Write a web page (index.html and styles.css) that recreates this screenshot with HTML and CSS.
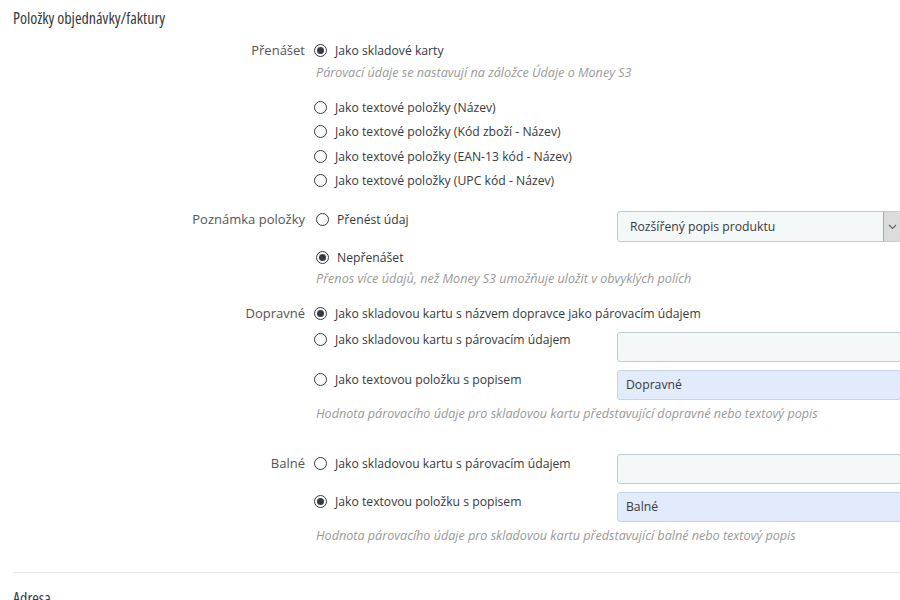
FILE: index.html
```html
<!DOCTYPE html>
<html lang="cs">
<head>
<meta charset="utf-8">
<title>Položky objednávky/faktury</title>
<link rel="stylesheet" href="styles.css">
</head>
<body>
<div class="page">
  <h3 class="section-title">Položky objednávky/faktury</h3>

  <div class="group g1">
    <div class="label">Přenášet</div>
    <div class="content">
      <label class="opt"><input type="radio" name="p" checked><span>Jako skladové karty</span></label>
      <div class="help h1">Párovací údaje se nastavují na záložce Údaje o Money S3</div>
      <div class="opts">
        <label class="opt"><input type="radio" name="p"><span>Jako textové položky (Název)</span></label>
        <label class="opt"><input type="radio" name="p"><span>Jako textové položky (Kód zboží - Název)</span></label>
        <label class="opt"><input type="radio" name="p"><span>Jako textové položky (EAN-13 kód - Název)</span></label>
        <label class="opt"><input type="radio" name="p"><span>Jako textové položky (UPC kód - Název)</span></label>
      </div>
    </div>
  </div>

  <div class="group g2">
    <div class="label short">Poznámka položky</div>
    <div class="content">
      <div class="row">
        <label class="opt short shift"><input type="radio" name="n"><span>Přenést údaj</span></label>
        <div class="select"><span class="select-text">Rozšířený popis produktu</span><span class="select-arrow"><svg width="9" height="6" viewBox="0 0 9 6"><path d="M1 1l3.5 3.5L8 1" fill="none" stroke="#666" stroke-width="1.2"/></svg></span></div>
      </div>
      <label class="opt line shift n2"><input type="radio" name="n" checked><span>Nepřenášet</span></label>
      <div class="help h2">Přenos více údajů, než Money S3 umožňuje uložit v obvyklých polích</div>
    </div>
  </div>

  <div class="group g3">
    <div class="label line">Dopravné</div>
    <div class="content">
      <label class="opt line"><input type="radio" name="d" checked><span>Jako skladovou kartu s názvem dopravce jako párovacím údajem</span></label>
      <div class="row r2">
        <label class="opt line"><input type="radio" name="d"><span>Jako skladovou kartu s párovacím údajem</span></label>
        <div class="field f-off"></div>
      </div>
      <div class="row r3">
        <label class="opt line"><input type="radio" name="d"><span>Jako textovou položku s popisem</span></label>
        <div class="field f-on">Dopravné</div>
      </div>
      <div class="help h3">Hodnota párovacího údaje pro skladovou kartu představující dopravné nebo textový popis</div>
    </div>
  </div>

  <div class="group g4">
    <div class="label line">Balné</div>
    <div class="content">
      <div class="row">
        <label class="opt line"><input type="radio" name="b"><span>Jako skladovou kartu s párovacím údajem</span></label>
        <div class="field f-off"></div>
      </div>
      <div class="row r3">
        <label class="opt line"><input type="radio" name="b" checked><span>Jako textovou položku s popisem</span></label>
        <div class="field f-on">Balné</div>
      </div>
      <div class="help h3">Hodnota párovacího údaje pro skladovou kartu představující balné nebo textový popis</div>
    </div>
  </div>

  <hr class="divider">
  <h3 class="section-title next">Adresa</h3>
</div>
</body>
</html>
```

FILE: styles.css
```css
html, body {
  margin: 0;
  padding: 0;
  background: #fff;
  overflow: hidden;
}
body {
  font-family: "Open Sans", "Noto Sans", sans-serif;
  font-size: 12.2px;
  color: #363a41;
  width: 900px;
  height: 600px;
}
.page {
  padding: 0 0 0 13px;
}
.section-title {
  margin: 0;
  padding: 9px 0;
  font-size: 16px;
  line-height: 18px;
  font-weight: 500;
  color: #363a41;
  font-stretch: 78%;
}
.group {
  display: flex;
}
.label {
  width: 292px;
  flex: 0 0 292px;
  text-align: right;
  color: #555;
  font-size: 13px;
  line-height: 24px;
  padding-right: 9px;
}
.label.short { line-height: 16px; }
.label.line { line-height: 18px; }
.content {
  display: flex;
  flex-direction: column;
  align-items: flex-start;
}
.opt {
  display: flex;
  align-items: center;
  gap: 8px;
  height: 24px;
  white-space: nowrap;
  color: #363a41;
}
.opt input {
  appearance: none;
  -webkit-appearance: none;
  margin: 0;
  width: 13px;
  height: 13px;
  border: 1px solid #363a41;
  border-radius: 50%;
  box-sizing: border-box;
  background: #fff;
  flex: 0 0 13px;
  position: relative;
}
.opt input:checked::after {
  content: "";
  position: absolute;
  left: 2px;
  top: 2px;
  width: 7px;
  height: 7px;
  border-radius: 50%;
  background: #363a41;
}
.opt.short { height: 16px; }
.opt.line { height: 18px; }
.opt.shift { margin-left: 2px; }
.help {
  font-style: italic;
  font-size: 12.6px;
  color: #999;
  line-height: 18px;
  white-space: nowrap;
  margin-left: 2px;
}
.g1 { margin-top: 2px; }
.h1 { margin-top: 2px; }
.opts { margin-top: 13px; }
.opts .opt { height: 24.5px; }

.row {
  display: flex;
  align-items: flex-start;
}
.row .opt { width: 303px; flex: 0 0 303px; }
.row .opt.shift { width: 301px; flex: 0 0 301px; }

.g2 { margin-top: 18px; }
.select {
  width: 284px;
  height: 31px;
  box-sizing: border-box;
  border: 1px solid #bbcdd2;
  border-radius: 3px;
  background: #f5f8f9;
  display: flex;
  align-items: center;
  overflow: hidden;
}
.select-text {
  flex: 1;
  padding-left: 12px;
  color: #363a41;
}
.select-arrow {
  width: 16px;
  height: 100%;
  background: #dcdcdc;
  border-left: 1px solid #a9a9a9;
  display: flex;
  align-items: center;
  justify-content: center;
}
.n2 { margin-top: 6px; }
.h2 { margin-top: 4px; }

.g3 { margin-top: 16px; }
.r2 { margin-top: 8px; }
.r2 .field { margin-top: 2px; }
.r3 { margin-top: 8px; }
.field {
  width: 284px;
  height: 30px;
  box-sizing: border-box;
  border: 1px solid #bbcdd2;
  border-radius: 3px;
  background: #f5f8f9;
  padding-left: 8px;
  line-height: 28px;
  color: #363a41;
}
.f-on {
  background: #e2ebfb;
  border-color: #c6d3e6;
}
.h3 { margin-top: 5px; }
.g4 { margin-top: 31px; }

.divider {
  margin: 27px 0 0 0;
  border: 0;
  border-top: 1px solid #e6e6e6;
  height: 0;
}
.section-title.next {
  padding-top: 16px;
}
```
